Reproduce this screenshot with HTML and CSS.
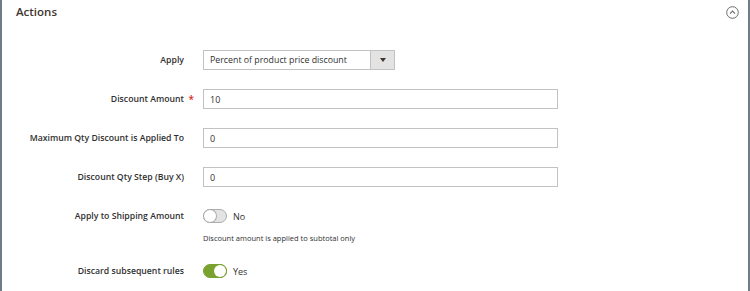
FILE: index.html
```html
<!DOCTYPE html>
<html>
<head>
  <title>Actions</title>
  <meta charset="utf-8">
  <link rel="stylesheet" href="styles.css">
</head>
<body>
  <div class="panel">
    <div class="panel-head">
      <h2>Actions</h2>
      <span class="collapse">
        <svg width="13" height="13" viewBox="0 0 13 13">
          <circle cx="6.5" cy="6.5" r="5.8" fill="none" stroke="#6b6b6b" stroke-width="1"/>
          <path d="M4 7.6 L6.5 5.1 L9 7.6" fill="none" stroke="#6b6b6b" stroke-width="1.1"/>
        </svg>
      </span>
    </div>
    <div class="fields">
      <div class="row">
        <label>Apply</label>
        <div class="control">
          <div class="select">
            <span class="select-text">Percent of product price discount</span>
            <span class="select-arrow"></span>
          </div>
        </div>
      </div>
      <div class="row">
        <label class="required">Discount Amount</label>
        <div class="control"><input type="text" value="10"></div>
      </div>
      <div class="row">
        <label>Maximum Qty Discount is Applied To</label>
        <div class="control"><input type="text" value="0"></div>
      </div>
      <div class="row">
        <label>Discount Qty Step (Buy X)</label>
        <div class="control"><input type="text" value="0"></div>
      </div>
      <div class="row toggle-row">
        <label>Apply to Shipping Amount</label>
        <div class="control">
          <div class="switch-line">
            <span class="switch"></span>
            <span class="switch-label">No</span>
          </div>
          <div class="note">Discount amount is applied to subtotal only</div>
        </div>
      </div>
      <div class="row toggle-row last">
        <label>Discard subsequent rules</label>
        <div class="control">
          <div class="switch-line">
            <span class="switch on"></span>
            <span class="switch-label">Yes</span>
          </div>
        </div>
      </div>
    </div>
  </div>
</body>
</html>
```

FILE: styles.css
```css
body {
  margin: 0;
  padding: 0;
  background: #fff;
  font-family: "Open Sans", "Liberation Sans", sans-serif;
  color: #303030;
}
.panel {
  border-left: 2px solid #6e7b88;
  border-right: 2px solid #6e7b88;
  width: 750px;
  height: 291px;
  box-sizing: border-box;
}
.panel-head {
  display: flex;
  align-items: center;
  justify-content: space-between;
  padding: 0 9px 0 14px;
  height: 22px;
}
.panel-head h2 {
  margin: 0;
  font-size: 11.5px;
  font-weight: 600;
  color: #41362f;
}
.collapse {
  display: flex;
  margin-top: 2px;
}
.fields {
  padding-top: 28px;
}
.row {
  display: grid;
  grid-template-columns: 182px 1fr;
  column-gap: 19px;
  align-items: center;
  margin-bottom: 19px;
}
.row label {
  text-align: right;
  font-size: 8.7px;
  font-weight: 600;
  color: #303030;
  position: relative;
}
.row label.required::after {
  content: "*";
  color: #e02b27;
  position: absolute;
  right: -10px;
  top: -1px;
  font-size: 10px;
}
input[type="text"] {
  display: block;
  width: 355px;
  height: 20px;
  box-sizing: border-box;
  border: 1px solid #c2c2c2;
  padding: 0 6px;
  font-family: inherit;
  font-size: 9px;
  color: #303030;
  outline: none;
  margin: 0;
}
.select {
  width: 192px;
  height: 20px;
  box-sizing: border-box;
  border: 1px solid #c2c2c2;
  display: flex;
  align-items: center;
}
.select-text {
  flex: 1;
  padding-left: 6px;
  font-size: 8.8px;
}
.select-arrow {
  width: 23px;
  height: 18px;
  background: #e3e3e3;
  border-left: 1px solid #c2c2c2;
  position: relative;
}
.select-arrow::after {
  content: "";
  position: absolute;
  left: 9px;
  top: 7px;
  border-left: 3px solid transparent;
  border-right: 3px solid transparent;
  border-top: 4px solid #41362f;
}
.toggle-row {
  align-items: start;
}
.toggle-row label {
  line-height: 20px;
}
.switch-line {
  display: flex;
  align-items: center;
  gap: 6px;
  height: 20px;
}
.switch {
  width: 24px;
  height: 14px;
  box-sizing: border-box;
  border: 1px solid #adadad;
  border-radius: 8px;
  background: #e3e3e3;
  position: relative;
}
.switch::after {
  content: "";
  position: absolute;
  left: 0;
  top: 0;
  width: 12px;
  height: 12px;
  border-radius: 50%;
  background: #fff;
  box-shadow: 0 0 0 1px #adadad;
}
.switch.on {
  background: #79a22e;
  border-color: #79a22e;
}
.switch.on::after {
  left: 10px;
  box-shadow: 0 0 0 1px #79a22e;
}
.switch-label {
  font-size: 9px;
}
.note {
  font-size: 7.5px;
  margin-top: 7px;
  color: #303030;
}
.toggle-row:not(.last) {
  margin-bottom: 18px;
}
.row.last {
  margin-bottom: 0;
}
```
